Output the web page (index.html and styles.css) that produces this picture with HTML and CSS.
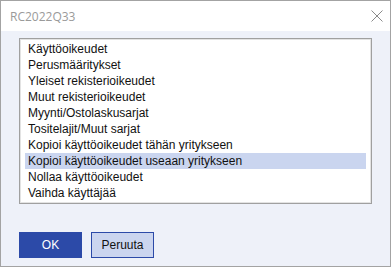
FILE: index.html
```html
<!DOCTYPE html>
<html>
<head>
<meta charset="utf-8">
<link rel="stylesheet" href="styles.css">
</head>
<body>
<div class="window">
  <div class="titlebar">
    <span class="title">RC2022Q33</span>
    <svg class="close" width="12" height="12" viewBox="0 0 12 12"><path d="M0.5 0.5 L11.5 11.5 M11.5 0.5 L0.5 11.5" stroke="#8a8a8a" stroke-width="1" fill="none"/></svg>
  </div>
  <div class="content">
    <div class="listbox">
      <ul class="items">
        <li class="item">Käyttöoikeudet</li>
        <li class="item">Perusmääritykset</li>
        <li class="item">Yleiset rekisterioikeudet</li>
        <li class="item">Muut rekisterioikeudet</li>
        <li class="item">Myynti/Ostolaskusarjat</li>
        <li class="item">Tositelajit/Muut sarjat</li>
        <li class="item">Kopioi käyttöoikeudet tähän yritykseen</li>
        <li class="item selected">Kopioi käyttöoikeudet useaan yritykseen</li>
        <li class="item">Nollaa käyttöoikeudet</li>
        <li class="item">Vaihda käyttäjää</li>
      </ul>
    </div>
    <div class="buttons">
      <button class="btn primary">OK</button>
      <button class="btn secondary">Peruuta</button>
    </div>
  </div>
</div>
</body>
</html>
```

FILE: styles.css
```css
html, body {
  margin: 0;
  padding: 0;
  background: #ffffff;
}
.window {
  box-sizing: border-box;
  width: 391px;
  height: 267px;
  border: 1px solid #a3a3a3;
  display: flex;
  flex-direction: column;
  background: #eef1f9;
}
.titlebar {
  height: 30px;
  background: #ffffff;
  display: flex;
  align-items: center;
  justify-content: space-between;
  padding: 0 7px 0 9px;
  flex: none;
}
.title {
  font-family: "Open Sans", "Noto Sans", sans-serif;
  font-size: 12px;
  color: #9a9a9a;
}
.close {
  display: block;
}
.content {
  flex: 1;
  padding: 7px 18px 8px 18px;
  display: flex;
  flex-direction: column;
}
.listbox {
  box-sizing: border-box;
  height: 166px;
  border: 1px solid #a0a0a0;
  box-shadow: inset 0 0 0 1px #e3e3e3;
  background: #ffffff;
  padding: 2px 5px 0 5px;
}
.items {
  list-style: none;
  margin: 0;
  padding: 0;
}
.item {
  height: 16px;
  line-height: 16px;
  padding-left: 3px;
  font-family: "Liberation Sans", Arial, sans-serif;
  font-size: 12px;
  color: #111111;
  white-space: nowrap;
}
.item.selected {
  background: #cad5ef;
}
.buttons {
  margin-top: auto;
  display: flex;
  gap: 9px;
}
.btn {
  box-sizing: border-box;
  width: 63px;
  height: 26px;
  font-family: "Liberation Sans", Arial, sans-serif;
  font-size: 12px;
  padding: 0;
  margin: 0;
}
.primary {
  background: #2c4aa8;
  border: 1px solid #2c4aa8;
  color: #ffffff;
}
.secondary {
  background: #cbd5ef;
  border: 1px solid #2c4aa8;
  color: #111111;
}
```
